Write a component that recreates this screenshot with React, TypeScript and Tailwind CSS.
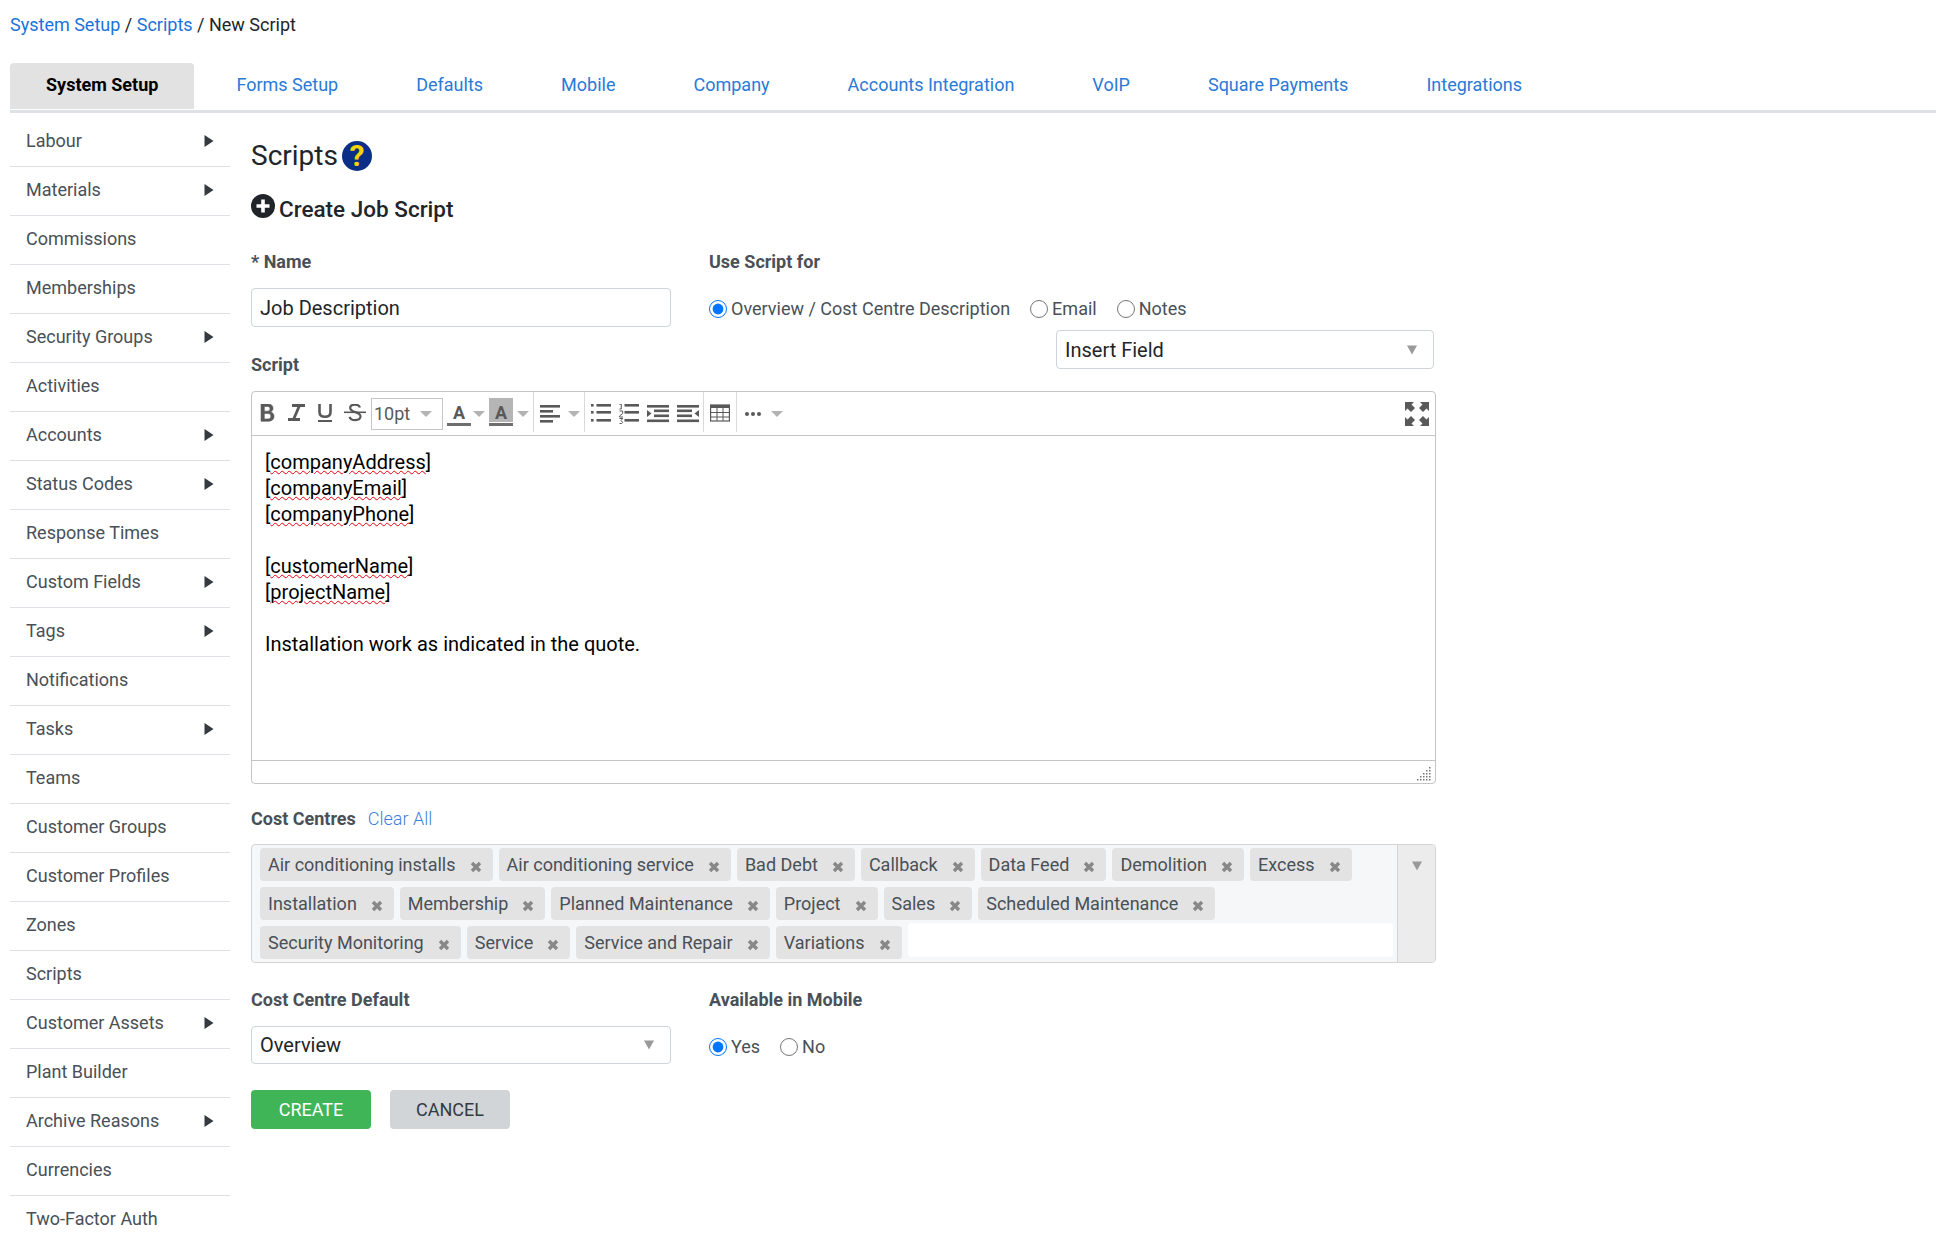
import React from "react";

const sidebar: [string, boolean][] = [
  ["Labour", true], ["Materials", true], ["Commissions", false], ["Memberships", false],
  ["Security Groups", true], ["Activities", false], ["Accounts", true], ["Status Codes", true],
  ["Response Times", false], ["Custom Fields", true], ["Tags", true], ["Notifications", false],
  ["Tasks", true], ["Teams", false], ["Customer Groups", false], ["Customer Profiles", false],
  ["Zones", false], ["Scripts", false], ["Customer Assets", true], ["Plant Builder", false],
  ["Archive Reasons", true], ["Currencies", false], ["Two-Factor Auth", false],
];

const tabs = ["Forms Setup", "Defaults", "Mobile", "Company", "Accounts Integration", "VoIP", "Square Payments", "Integrations"];

const tags = [
  "Air conditioning installs", "Air conditioning service", "Bad Debt", "Callback", "Data Feed", "Demolition", "Excess",
  "Installation", "Membership", "Planned Maintenance", "Project", "Sales", "Scheduled Maintenance",
  "Security Monitoring", "Service", "Service and Repair", "Variations",
];

const ICON = "#595959";

function Caret({ className = "" }: { className?: string }) {
  return (
    <svg viewBox="0 0 12 6" className={`w-3 h-1.5 shrink-0 ${className}`}>
      <path d="M0 0h12L6 6z" fill="#b3b3b3" />
    </svg>
  );
}

function SelectArrow({ className = "" }: { className?: string }) {
  return (
    <svg viewBox="0 0 10 9" className={`w-2.5 h-2.5 ${className}`}>
      <path d="M0 0h10L5 9z" fill="#999" />
    </svg>
  );
}

function Lines({ rows }: { rows: [number, number, number][] }) {
  return (
    <>
      {rows.map(([x, y, w], i) => (
        <rect key={i} x={x} y={y} width={w} height="2.6" fill={ICON} />
      ))}
    </>
  );
}

function ColorButton({ on }: { on?: boolean }) {
  return (
    <div className="ml-1 w-6 self-start mt-1.5 flex flex-col shrink-0">
      <div className={`h-6 flex items-end justify-center font-bold text-lg leading-none text-[#595959] ${on ? "bg-[#b5b5b5]" : ""}`}>A</div>
      <div className="h-0.75 mt-px bg-[#6e6e6e]" />
    </div>
  );
}

function Toolbar() {
  const sep = "w-px h-10 self-start bg-[#d9d9d9] shrink-0";
  return (
    <div className="flex items-center h-11 pl-0.5 border-b border-[#c5c5c5]">
      <svg viewBox="0 0 28 20" className="w-7 h-5 shrink-0">
        <path transform="matrix(1.26 0 0 1.15 -4.3 -2.3)" d="M9 2h5.5c2.6 0 4 1.4 4 3.7 0 1.6-.8 2.7-2 3.2 1.7.4 2.8 1.7 2.8 3.7 0 2.7-1.7 4.4-4.6 4.4H9zm2.6 2.2v4h2.7c1.2 0 1.8-.8 1.8-2s-.6-2-1.800-2zm0 6.100v4.700h3.100c1.300 0 2.100-.9 2.100-2.400s-.8-2.300-2.100-2.300z" fill={ICON} stroke={ICON} strokeWidth=".5" />
      </svg>
      <svg viewBox="0 0 28 20" className="w-7 h-5 ml-px shrink-0">
        <path d="M9 1.500h13M5 15.500h12M16.500 1.500L10.500 15.500" stroke={ICON} strokeWidth="2.800" fill="none" />
      </svg>
      <svg viewBox="0 0 28 20" className="w-7 h-5 ml-px shrink-0">
        <path d="M7.500 0v8c0 3.200 2 4.800 5.500 4.800s5.500-1.600 5.500-4.800V0" stroke={ICON} strokeWidth="2.600" fill="none" />
        <rect x="6" y="16" width="14" height="2" fill={ICON} />
      </svg>
      <svg viewBox="0 0 28 20" className="w-7 h-5 ml-px shrink-0">
        <path d="M19 3.500c-.6-2-2.400-2.800-5-2.800-2.800 0-4.800 1.200-4.800 3.300 0 5 10.300 3.300 10.300 8.300 0 2.400-2.200 3.800-5.300 3.800-3 0-5-1.200-5.700-3.300" stroke={ICON} strokeWidth="2.200" fill="none" />
        <rect x="3" y="7.500" width="22" height="1.600" fill={ICON} />
      </svg>

      <div className="ml-0.5 w-18 h-8 border border-[#c5c5c5] flex items-center pl-0.5 shrink-0 text-lg leading-none text-[#595959]">
        <span>10pt</span>
        <Caret className="ml-2.5" />
      </div>

      <ColorButton />
      <Caret className="ml-0.5" />
      <ColorButton on />
      <Caret className="ml-1" />
      <div className={`ml-1 ${sep}`} />

      <svg viewBox="0 0 20 20" className="ml-1.5 w-5 h-5 shrink-0">
        <Lines rows={[[0, 1, 20], [0, 6, 13], [0, 11, 20], [0, 16, 13]]} />
      </svg>
      <Caret className="ml-2" />
      <div className={`ml-1 ${sep}`} />

      <svg viewBox="0 0 20 20" className="ml-1.5 w-5 h-5 shrink-0">
        <Lines rows={[[5.500, 0, 14.500], [5.500, 7, 14.500], [5.500, 15, 14.500]]} />
        <rect x="0" y="0" width="2.600" height="2.600" fill={ICON} />
        <rect x="0" y="7" width="2.600" height="2.600" fill={ICON} />
        <rect x="0" y="15" width="2.600" height="2.600" fill={ICON} />
      </svg>
      <svg viewBox="0 0 20 20" className="ml-2 w-5 h-5 shrink-0">
        <Lines rows={[[5.500, 0, 14.500], [5.500, 7, 14.500], [5.500, 15, 14.500]]} />
        <path d="M.5.500l1.800-.5v5M2.300 5H.5M.5 7h3.200v2.500L.5 12v1h3.500M.5 14.500h3.200l-1.700 2 1.700 2-1.200 1H.5" stroke={ICON} strokeWidth="1" fill="none" />
      </svg>
      <svg viewBox="0 0 22 20" className="ml-2 w-5.5 h-5 shrink-0">
        <Lines rows={[[0, 1, 22], [7, 5.500, 15], [7, 10.500, 15], [0, 15.500, 22]]} />
        <path d="M0 6l4.500 3.500L0 13z" fill={ICON} />
      </svg>
      <svg viewBox="0 0 22 20" className="ml-2 w-5.5 h-5 shrink-0">
        <Lines rows={[[0, 1, 22], [0, 5.500, 15], [0, 10.500, 15], [0, 15.500, 22]]} />
        <path d="M22 6l-4.500 3.500L22 13z" fill={ICON} />
      </svg>
      <div className={`ml-1 ${sep}`} />

      <svg viewBox="0 0 20 20" className="ml-1.5 w-5 h-5 shrink-0">
        <rect x=".6" y="1" width="18.800" height="16" fill="none" stroke={ICON} strokeWidth="1.200" />
        <rect x="0" y="1" width="20" height="3" fill={ICON} />
        <path d="M7 1v16M13 1v16M0 8.500h20M0 13h20" stroke={ICON} strokeWidth="1" />
      </svg>
      <div className={`ml-1.5 ${sep}`} />

      <svg viewBox="0 0 16 4" className="ml-2 w-4 h-1 shrink-0">
        <circle cx="2" cy="2" r="2" fill={ICON} />
        <circle cx="8" cy="2" r="2" fill={ICON} />
        <circle cx="14" cy="2" r="2" fill={ICON} />
      </svg>
      <Caret className="ml-2.5" />

      <svg viewBox="0 0 24 24" className="ml-auto mr-1.5 w-6 h-6 shrink-0">
        <path d="M0 0h9L6.500 2.500 10 6 6 10 2.500 6.500 0 9zM24 0v9l-2.500-2.500L18 10l-4-4 3.500-3.500L15 0zM0 24v-9l2.500 2.500L6 14l4 4-3.500 3.500L9 24zM24 24h-9l2.500-2.500L14 18l4-4 3.500 3.500L24 15z" fill={ICON} />
      </svg>
    </div>
  );
}

function Spell({ children }: { children: string }) {
  return (
    <div>
      [<span className="underline decoration-wavy decoration-red-600 decoration-1 underline-offset-1">{children}</span>]
    </div>
  );
}

function Radio({ label, checked, name, className = "" }: { label: string; checked?: boolean; name: string; className?: string }) {
  return (
    <label className={`flex items-center gap-1 text-[#495057] ${className}`}>
      <input type="radio" name={name} defaultChecked={checked} className="w-4.5 h-4.5 m-0" />
      <span>{label}</span>
    </label>
  );
}

function Label({ children }: { children: React.ReactNode }) {
  return <div className="font-bold leading-6 text-[#495057]">{children}</div>;
}

export default function App() {
  return (
    <div
      className="h-screen overflow-hidden bg-white text-lg text-[#212529]"
      style={{ fontFamily: "Roboto, 'Liberation Sans', sans-serif" }}
    >
      <div className="pl-2.5 pt-3 pb-6.25 leading-6.5">
        <a className="text-[#1a73d9]">System Setup</a> / <a className="text-[#1a73d9]">Scripts</a> / New Script
      </div>

      <div className="ml-2.5 flex gap-1.5 border-b-3 border-[#dee2e6] pb-px">
        <div className="px-9 h-11.5 pb-0.5 flex items-center bg-[#e2e2e2] rounded-t font-bold text-black">System Setup</div>
        {tabs.map((t) => (
          <a key={t} className="px-9 h-11.5 pb-0.5 flex items-center text-[#2a7ad6]">{t}</a>
        ))}
      </div>

      <div className="flex pl-2.5 pt-1.25">
        <nav className="w-55 shrink-0">
          {sidebar.map(([name, arrow]) => (
            <div key={name} className="h-12.25 pb-0.5 flex items-center justify-between pl-4 pr-4 border-b border-[#dee2e6] text-[#495057]">
              <span>{name}</span>
              {arrow && (
                <svg viewBox="0 0 9 12" className="w-2.5 h-3">
                  <path d="M0 0l9 6-9 6z" fill="#343a40" />
                </svg>
              )}
            </div>
          ))}
        </nav>

        <main className="ml-5.25 w-296.25 pt-5.75">
          <div className="flex items-center gap-1 h-7.5">
            <h1 className="text-[28px] font-normal leading-none">Scripts</h1>
            <span className="w-7.5 h-7.5 rounded-full bg-[#0b2f86] flex items-center justify-center font-bold text-3xl leading-none text-[#f5d400]">?</span>
          </div>

          <div className="flex items-center gap-1 mt-6.25 h-6.5">
            <svg viewBox="0 0 24 24" className="w-6 h-6 -mt-1.5">
              <circle cx="12" cy="12" r="12" fill="#212529" />
              <path d="M12 5.500v13M5.500 12h13" stroke="#fff" strokeWidth="3.600" />
            </svg>
            <h2 className="text-[22.5px] font-medium leading-none">Create Job Script</h2>
          </div>

          <div className="flex mt-7">
            <div className="w-105 shrink-0">
              <Label>* Name</Label>
              <input
                readOnly
                value="Job Description"
                className="mt-3.5 w-full h-9.75 px-2 border border-[#ced4da] rounded text-xl text-[#212529]"
              />
              <div className="mt-6.5">
                <Label>Script</Label>
              </div>
            </div>
            <div className="ml-9.5 flex-1 flex flex-col">
              <Label>Use Script for</Label>
              <div className="flex items-center mt-5.5 h-6.5">
                <Radio name="use" label="Overview / Cost Centre Description" checked />
                <Radio name="use" label="Email" className="ml-5" />
                <Radio name="use" label="Notes" className="ml-5" />
              </div>
              <div className="mt-2 self-end mr-0.5 w-94.5 h-9.75 px-2 border border-[#ced4da] rounded flex items-center justify-between text-xl">
                <span>Insert Field</span>
                <SelectArrow className="mr-2" />
              </div>
            </div>
          </div>

          <div className="mt-3.5 border border-[#c5c5c5] rounded-sm">
            <Toolbar />
            <div className="h-81 px-3.25 pt-3.25 text-xl leading-6.5 text-black">
              <Spell>companyAddress</Spell>
              <Spell>companyEmail</Spell>
              <Spell>companyPhone</Spell>
              <div className="h-6.5" />
              <Spell>customerName</Spell>
              <Spell>projectName</Spell>
              <div className="h-6.5" />
              <div>Installation work as indicated in the quote.</div>
            </div>
            <div className="h-5.75 border-t border-[#c5c5c5] flex justify-end items-end pb-0.5 pr-1">
              <svg viewBox="0 0 14 14" className="w-3.5 h-3.5">
                {[[12, 0], [12, 3], [9, 3], [12, 6], [9, 6], [6, 6], [12, 9], [9, 9], [6, 9], [3, 9], [12, 12], [9, 12], [6, 12], [3, 12], [0, 12]].map(([x, y], i) => (
                  <rect key={i} x={x} y={y} width="1.500" height="1.500" fill="#777" />
                ))}
              </svg>
            </div>
          </div>

          <div className="flex items-center mt-5.75 leading-6">
            <span className="font-bold text-[#495057]">Cost Centres</span>
            <a className="ml-3 font-light text-[#3f7fdc]">Clear All</a>
          </div>

          <div className="mt-3.25 flex border border-[#d4d4d4] rounded bg-[#f6f7f9]">
            <div className="flex-1 flex flex-wrap gap-x-1.5 gap-y-1.5 pl-2 pr-1 pt-0.75 pb-0.75">
              {tags.map((t) => (
                <div key={t} className="h-8.25 pl-2 pr-2.75 flex items-center rounded bg-[#e3e3e3] text-[#495057]">
                  <span>{t}</span>
                  <svg viewBox="0 0 12 12" className="ml-3.5 mt-1 w-3 h-3">
                    <path d="M2 2l8 8M10 2l-8 8" stroke="#888" strokeWidth="3.400" />
                  </svg>
                </div>
              ))}
              <div className="flex-1 h-8.5 -mt-0.75 rounded bg-white" />
            </div>
            <div className="w-9.5 border-l border-[#d4d4d4] bg-[#ececec] flex justify-center pt-4 rounded-r">
              <SelectArrow />
            </div>
          </div>

          <div className="flex mt-6.25">
            <div className="w-105 shrink-0">
              <Label>Cost Centre Default</Label>
              <div className="mt-3.5 h-9.5 px-2 border border-[#ced4da] rounded flex items-center justify-between text-xl">
                <span>Overview</span>
                <SelectArrow className="mr-2" />
              </div>
            </div>
            <div className="ml-9.5">
              <Label>Available in Mobile</Label>
              <div className="flex items-center mt-5.5 h-6.5">
                <Radio name="mob" label="Yes" checked />
                <Radio name="mob" label="No" className="ml-5" />
              </div>
            </div>
          </div>

          <div className="flex gap-4.75 mt-6.5">
            <button className="w-30 h-9.75 rounded bg-[#3fb558] text-white">CREATE</button>
            <button className="w-30 h-9.75 rounded bg-[#d1d5d8] text-[#343a40]">CANCEL</button>
          </div>
        </main>
      </div>
    </div>
  );
}
